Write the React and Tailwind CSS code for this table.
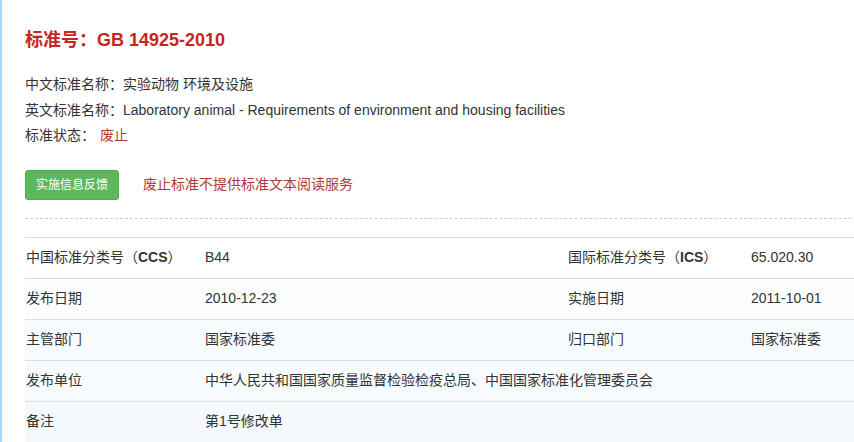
import React from "react";

const F = { fontFamily: '"Liberation Sans", Arial, "Noto Sans CJK SC", sans-serif' };

function Row({ bg, children }) {
  return (
    <div className={`flex h-[41px] items-center border-t border-[#dddddd] text-[14px] text-[#333] ${bg}`}>
      {children}
    </div>
  );
}

export default function App() {
  return (
    <div className="h-[442px] w-[854px] overflow-hidden bg-white border-l-2 border-[#a6d8f7]" style={F}>
      <div className="w-[900px] pl-[23px]">
        <div className="pt-[30px] h-[50px] text-[18px] font-bold leading-[20px] text-[#c7251f]">
          标准号：GB 14925-2010
        </div>
        <div className="mt-[22px] flex flex-col text-[14px] text-[#333] leading-[25.5px]">
          <div>中文标准名称：实验动物 环境及设施</div>
          <div>英文标准名称：Laboratory animal - Requirements of environment and housing facilities</div>
          <div>
            标准状态：<span className="ml-[5px] text-[#b03a36]">废止</span>
          </div>
        </div>
        <div className="mt-[21px] flex items-center">
          <div className="flex h-[30px] w-[94px] items-center justify-center rounded-[3px] border border-[#4cae4c] bg-[#5cb85c] text-[12px] text-white">
            实施信息反馈
          </div>
          <div className="ml-[24px] text-[14px] text-[#b03a36]">废止标准不提供标准文本阅读服务</div>
        </div>
        <div className="mt-[18px] border-t border-dashed border-[#cccccc]"></div>
        <div className="mt-[18px]">
          <Row bg="bg-white">
            <div className="w-[180px] pl-px">
              中国标准分类号（<span className="font-bold">CCS</span>）
            </div>
            <div className="w-[363px]">B44</div>
            <div className="w-[183px]">
              国际标准分类号（<span className="font-bold">ICS</span>）
            </div>
            <div>65.020.30</div>
          </Row>
          <Row bg="bg-[#fcfdfe]">
            <div className="w-[180px] pl-px">发布日期</div>
            <div className="w-[363px]">2010-12-23</div>
            <div className="w-[183px]">实施日期</div>
            <div>2011-10-01</div>
          </Row>
          <Row bg="bg-[#f8fbfe]">
            <div className="w-[180px] pl-px">主管部门</div>
            <div className="w-[363px]">国家标准委</div>
            <div className="w-[183px]">归口部门</div>
            <div>国家标准委</div>
          </Row>
          <Row bg="bg-[#f8fbfe]">
            <div className="w-[180px] pl-px">发布单位</div>
            <div>中华人民共和国国家质量监督检验检疫总局、中国国家标准化管理委员会</div>
          </Row>
          <Row bg="bg-[#f5f9fd]">
            <div className="w-[180px] pl-px">备注</div>
            <div>第1号修改单</div>
          </Row>
        </div>
      </div>
    </div>
  );
}
